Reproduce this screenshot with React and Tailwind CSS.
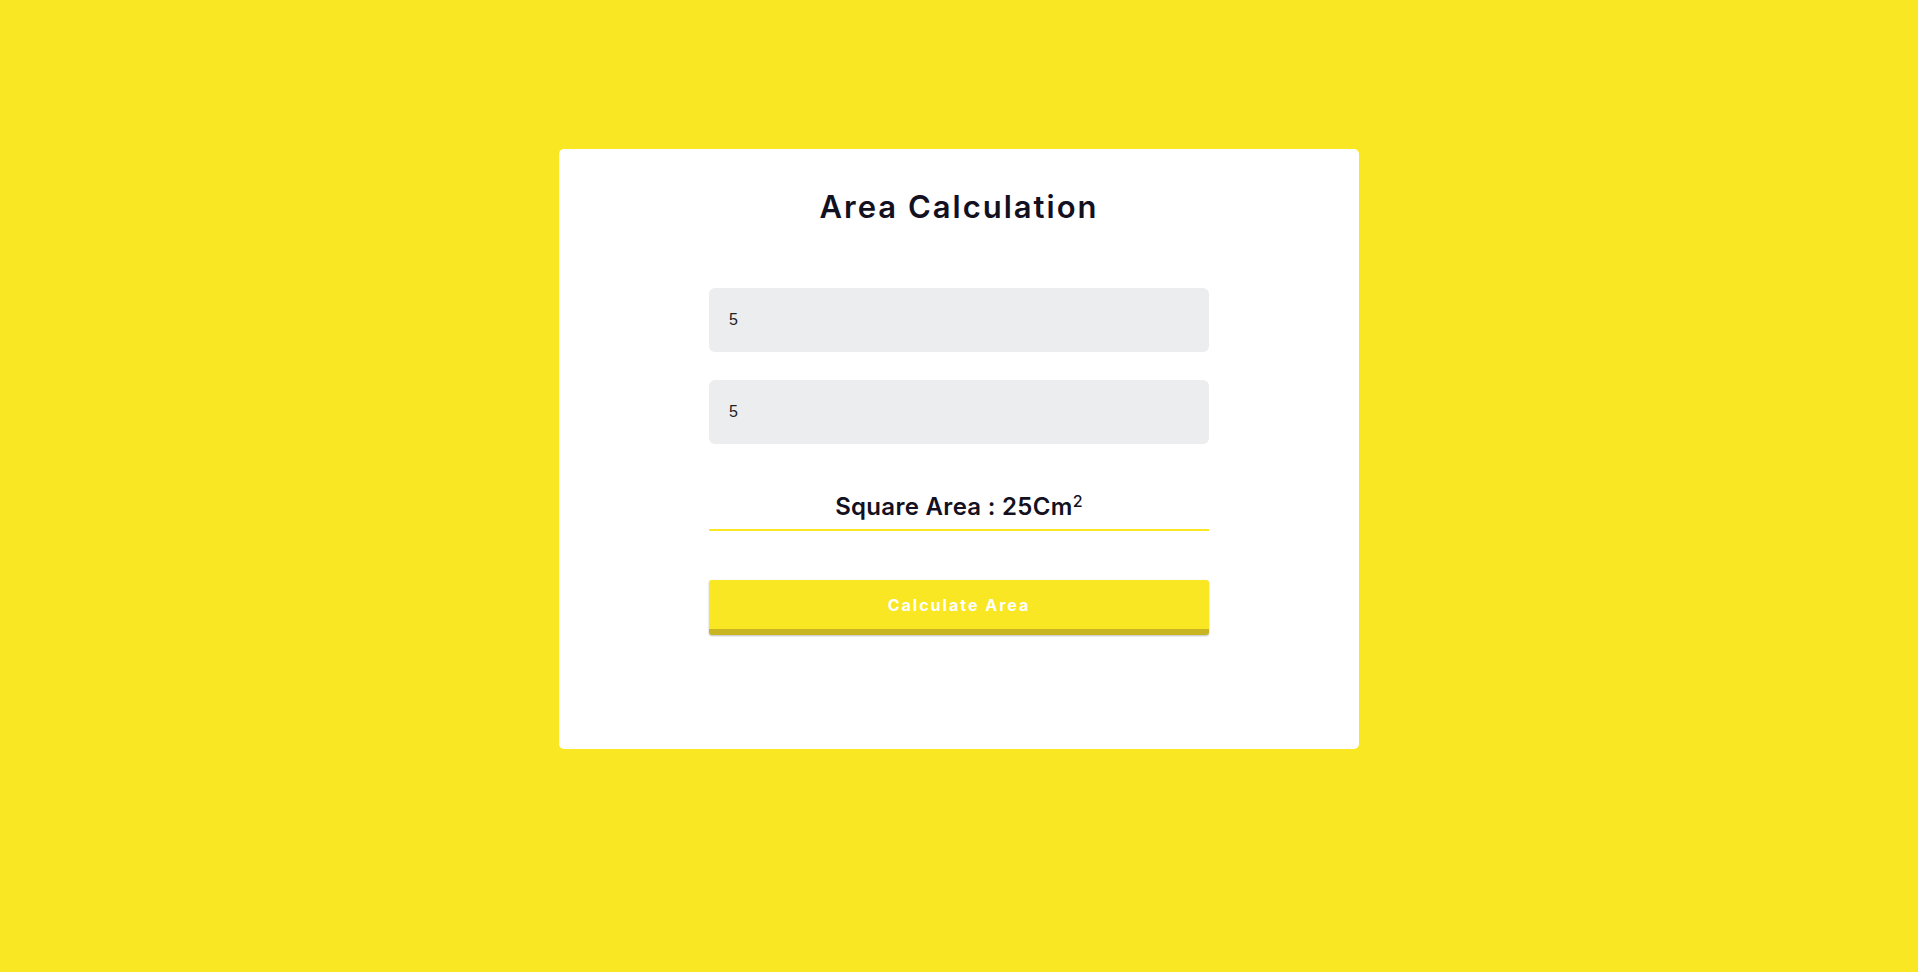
import { useState } from "react";

const App = () => {
  const [width, setWidth] = useState("5");
  const [height, setHeight] = useState("5");
  const [area, setArea] = useState(25);

  // compute square area from the two inputs
  const calculate = () => {
    const w = parseFloat(width) || 0;
    const h = parseFloat(height) || 0;
    setArea(w * h);
  };

  return (
    <div className="min-h-screen w-full bg-[#f9e723] pt-[149px] font-['Inter',sans-serif]">
      <div className="mx-auto w-[800px] h-[600px] bg-white rounded-[5px] pt-[38px]">
        <h1 className="text-center text-[31px] leading-[40px] font-semibold tracking-[2px] text-[#13111f]">
          Area Calculation
        </h1>

        <div className="mx-auto w-[500px] mt-[61px] flex flex-col gap-[28px]">
          <input
            type="text"
            value={width}
            onChange={(e) => setWidth(e.target.value)}
            className="h-[64px] w-full rounded-[6px] bg-[#ecedef] px-5 text-[16px] text-[#222] font-['Liberation_Sans',sans-serif] outline-none"
          />
          <input
            type="text"
            value={height}
            onChange={(e) => setHeight(e.target.value)}
            className="h-[64px] w-full rounded-[6px] bg-[#ecedef] px-5 text-[16px] text-[#222] font-['Liberation_Sans',sans-serif] outline-none"
          />
        </div>

        <div className="mx-auto w-[500px] mt-[47px] border-b-2 border-[#f9e723] pb-[6px] text-center">
          <h2 className="text-[24px] leading-[32px] font-semibold tracking-[0.3px] text-[#13111f]">
            Square Area : {area}Cm<sup className="text-[16px] font-medium">2</sup>
          </h2>
        </div>

        <button
          onClick={calculate}
          className="mx-auto mt-[49px] block h-[55px] w-[500px] rounded-[3px] bg-[#f9e723] border-b-[6px] border-[#c8b521] shadow-[0_1px_2px_rgba(0,0,0,0.25)] text-white text-[16px] font-bold tracking-[2px]"
        >
          Calculate Area
        </button>
      </div>
    </div>
  );
};

export default App;
